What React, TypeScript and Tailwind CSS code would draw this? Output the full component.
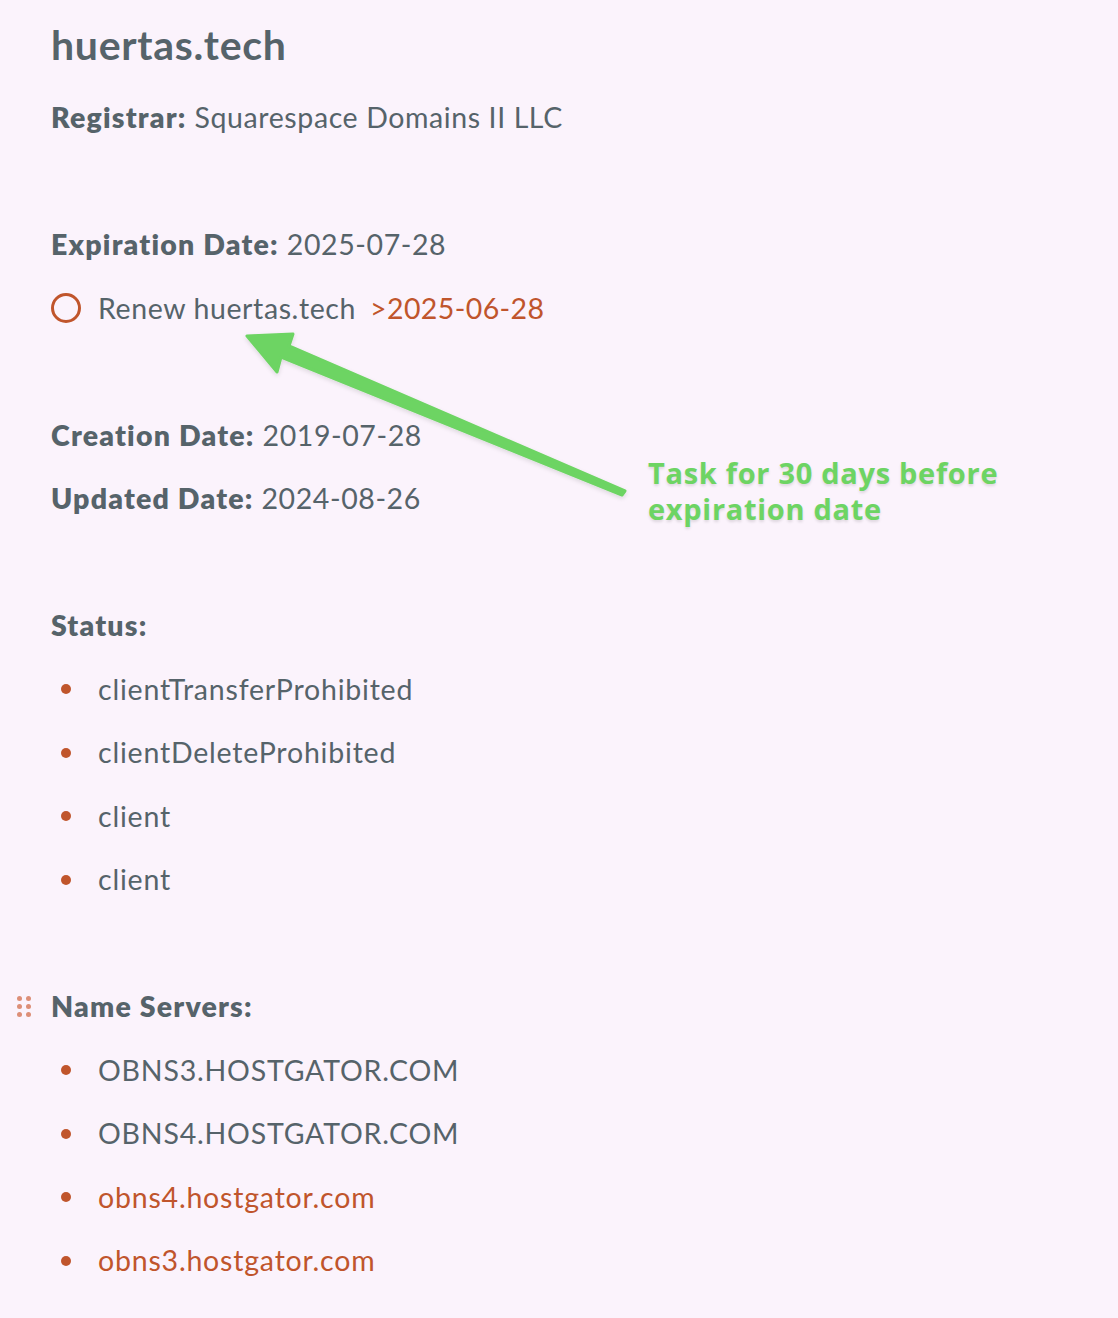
import React from "react";

const statuses = ["clientTransferProhibited", "clientDeleteProhibited", "client", "client"];
const servers = [
  { name: "OBNS3.HOSTGATOR.COM", link: false },
  { name: "OBNS4.HOSTGATOR.COM", link: false },
  { name: "obns4.hostgator.com", link: true },
  { name: "obns3.hostgator.com", link: true },
];

function Line({ children }: { children: React.ReactNode }) {
  return <div className="h-[63.5px] flex items-center whitespace-nowrap">{children}</div>;
}

function Bullet({ children, link }: { children: React.ReactNode; link?: boolean }) {
  return (
    <Line>
      <span className="w-[30px] flex justify-center shrink-0">
        <span className="w-[10px] h-[10px] rounded-full bg-[#c0552c]" />
      </span>
      <span className={"ml-[17px] tracking-[0.8px] " + (link ? "text-[#c0552c]" : "")}>{children}</span>
    </Line>
  );
}

function Label({ children }: { children: React.ReactNode }) {
  return <span className="font-extrabold tracking-[1.2px] mr-[8px]">{children}</span>;
}

export default function App() {
  return (
    <div
      className="relative min-h-[1318px] w-full bg-[#fbf3fc] text-[#56636a] text-[28.5px] tracking-[0.6px] pl-[51px] pt-[16px]"
      style={{ fontFamily: "Lato, 'Noto Sans', sans-serif" }}
    >
      <h1 className="h-[70px] pb-[12px] flex items-center text-[41px] font-bold tracking-[0.7px]">huertas.tech</h1>
      <Line>
        <Label>Registrar:</Label>
        <span>Squarespace Domains II LLC</span>
      </Line>
      <Line>{""}</Line>
      <Line>
        <Label>Expiration Date:</Label>
        <span>2025-07-28</span>
      </Line>
      <Line>
        <span className="w-[30px] h-[30px] rounded-full border-[3px] border-[#c0552c] shrink-0" />
        <span className="ml-[17px]">Renew huertas.tech</span>
        <span className="ml-[14px] text-[#c0552c] tracking-[0.4px]">&gt;2025-06-28</span>
      </Line>
      <Line>{""}</Line>
      <Line>
        <Label>Creation Date:</Label>
        <span>2019-07-28</span>
      </Line>
      <Line>
        <Label>Updated Date:</Label>
        <span>2024-08-26</span>
      </Line>
      <Line>{""}</Line>
      <Line>
        <Label>Status:</Label>
      </Line>
      {statuses.map((s, i) => (
        <Bullet key={i}>{s}</Bullet>
      ))}
      <Line>{""}</Line>
      <div className="relative">
        <span className="absolute -left-[34px] top-[21px] grid grid-cols-2 gap-x-[4px] gap-y-[3px]">
          {[0, 1, 2, 3, 4, 5].map((d) => (
            <span key={d} className="w-[5px] h-[5px] rounded-full bg-[#dd8f78]" />
          ))}
        </span>
        <Line>
          <Label>Name Servers:</Label>
        </Line>
      </div>
      {servers.map((s, i) => (
        <Bullet key={i} link={s.link}>
          {s.name}
        </Bullet>
      ))}

      {/* annotation */}
      <svg className="absolute left-0 top-0 pointer-events-none" width="1118" height="1318" viewBox="0 0 1118 1318">
        <defs>
          <filter id="sh" x="-10%" y="-10%" width="120%" height="130%">
            <feDropShadow dx="0" dy="2" stdDeviation="2" floodColor="#000" floodOpacity="0.12" />
          </filter>
        </defs>
        <path
          d="M247 336 L293 334 L289 346 L625 491 L622 495 L281 357 L277 372 Z"
          fill="#6dd463"
          stroke="#6dd463"
          strokeWidth="3"
          strokeLinejoin="round"
          filter="url(#sh)"
        />
      </svg>
      <div
        className="absolute left-[648px] top-[455px] text-[#6dd463] font-bold text-[29px] leading-[36px] tracking-[0.7px] whitespace-nowrap"
        style={{ fontFamily: "'Open Sans', 'Noto Sans', sans-serif", textShadow: "0 2px 3px rgba(0,0,0,0.12)" }}
      >
        Task for 30 days before
        <br />
        expiration date
      </div>
    </div>
  );
}
